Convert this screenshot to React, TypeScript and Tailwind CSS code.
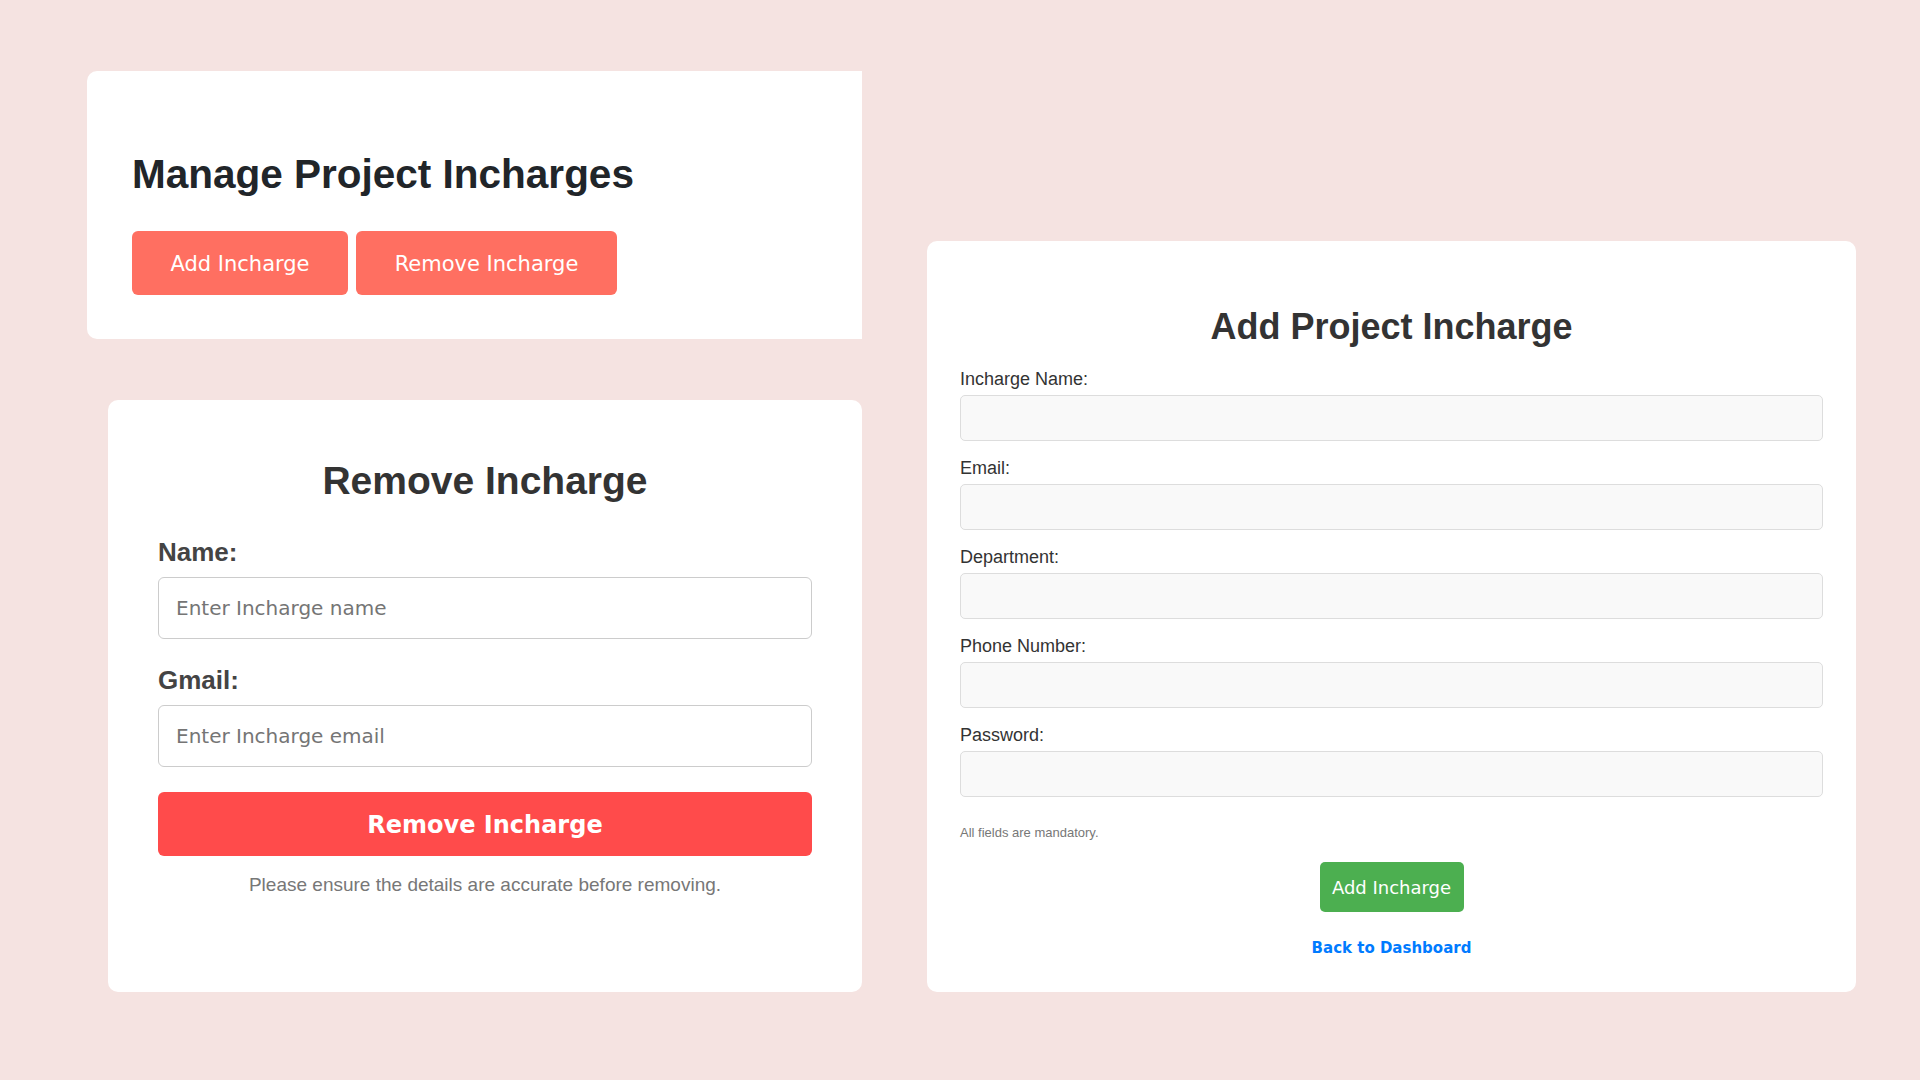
export default function App() {
  const arial = { fontFamily: '"Liberation Sans", Arial, sans-serif' }
  const tahoma = { fontFamily: '"DejaVu Sans", Tahoma, Verdana, sans-serif' }

  const fields = ['Incharge Name:', 'Email:', 'Department:', 'Phone Number:', 'Password:']

  return (
    <div className="min-h-screen w-full bg-[#f5e3e1] flex items-end pt-[71px] pl-[87px] gap-[65px] pb-[88px]" style={arial}>
      {/* left column */}
      <div className="w-[775px] flex flex-col items-end gap-[61px]">
        <div className="w-full h-[268px] bg-white rounded-l-[10px] pl-[45px] pt-[80px]">
          <h1 className="text-[40.5px] leading-[46px] font-bold text-[#212529]">Manage Project Incharges</h1>
          <div className="flex gap-2 mt-[34px]">
            <button className="w-[216px] h-16 rounded-[6px] bg-[#ff6f61] text-white text-[21px] pt-[3px]" style={tahoma}>
              Add Incharge
            </button>
            <button className="w-[261px] h-16 rounded-[6px] bg-[#ff6f61] text-white text-[21px] pt-[3px]" style={tahoma}>
              Remove Incharge
            </button>
          </div>
        </div>

        <div className="w-[754px] h-[592px] bg-white rounded-[10px] px-[50px] pt-[58px]">
          <h2 className="text-center text-[39px] leading-[46px] font-bold text-[#333]">Remove Incharge</h2>
          <label className="block mt-[33px] text-[26px] leading-[30px] font-bold text-[#444]">Name:</label>
          <input
            className="block w-full h-[62px] mt-[10px] border border-[#cccccc] rounded-[6px] px-[17px] text-[20px] placeholder:text-[#757575] outline-none"
            style={tahoma}
            placeholder="Enter Incharge name"
          />
          <label className="block mt-[26px] text-[26px] leading-[30px] font-bold text-[#444]">Gmail:</label>
          <input
            className="block w-full h-[62px] mt-[10px] border border-[#cccccc] rounded-[6px] px-[17px] text-[20px] placeholder:text-[#757575] outline-none"
            style={tahoma}
            placeholder="Enter Incharge email"
          />
          <button className="block w-full h-16 mt-[25px] rounded-[6px] bg-[#ff4b4b] text-white text-[24px] font-bold pt-[2px]" style={tahoma}>
            Remove Incharge
          </button>
          <p className="mt-[18px] text-center text-[19px] leading-[22px] text-[#777]">
            Please ensure the details are accurate before removing.
          </p>
        </div>
      </div>

      {/* right card */}
      <div className="w-[929px] h-[751px] bg-white rounded-[10px] px-[33px] pt-[65px]">
        <h2 className="text-center text-[36px] leading-[42px] font-bold text-[#333]">Add Project Incharge</h2>
        <div className="mt-[21px]">
          {fields.map((f) => (
            <div key={f} className="mb-[17px]">
              <label className="block text-[18px] leading-[21px] text-[#333] mb-[5px]">{f}</label>
              <input
                type={f === 'Password:' ? 'password' : 'text'}
                className="block w-full h-[46px] bg-[#f9f9f9] border border-[#dddddd] rounded-[5px] outline-none"
              />
            </div>
          ))}
        </div>
        <p className="mt-[28px] text-[13px] leading-[15px] text-[#777]">All fields are mandatory.</p>
        <div className="flex justify-center mt-[22px]">
          <button className="w-[144px] h-[50px] rounded-[5px] bg-[#4caf50] text-white text-[18px]" style={tahoma}>
            Add Incharge
          </button>
        </div>
        <div className="text-center mt-[24px]">
          <a href="#" className="text-[15px] leading-[18px] font-bold text-[#007bff]" style={tahoma}>
            Back to Dashboard
          </a>
        </div>
      </div>
    </div>
  )
}
